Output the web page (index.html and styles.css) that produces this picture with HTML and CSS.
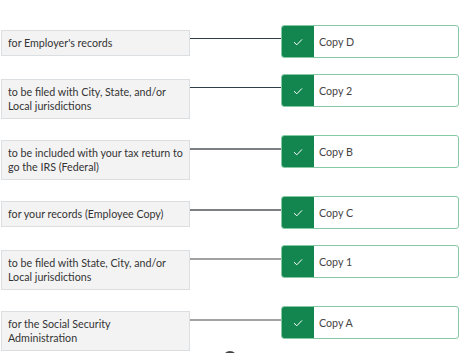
FILE: index.html
```html
<!DOCTYPE html>
<html lang="en">
<head>
    <meta charset="UTF-8">
    <meta name="viewport" content="width=device-width, initial-scale=1.0">
    <title>W-2 Copies</title>
    <link rel="stylesheet" href="styles.css">
</head>
<body>
    <div class="match-list">
        <div class="match-row">
            <div class="prompt">for Employer's records</div>
            <div class="connector dark"></div>
            <div class="answer">
                <span class="tick"><svg width="10" height="8" viewBox="0 0 10 8"><path d="M1 4.2 L3.8 6.8 L9 1.4" fill="none" stroke="#fff" stroke-width="1"/></svg></span>
                <span class="label">Copy D</span>
            </div>
        </div>
        <div class="match-row">
            <div class="prompt">to be filed with City, State, and/or<br>Local jurisdictions</div>
            <div class="connector dark"></div>
            <div class="answer">
                <span class="tick"><svg width="10" height="8" viewBox="0 0 10 8"><path d="M1 4.2 L3.8 6.8 L9 1.4" fill="none" stroke="#fff" stroke-width="1"/></svg></span>
                <span class="label">Copy 2</span>
            </div>
        </div>
        <div class="match-row">
            <div class="prompt">to be included with your tax return to<br>go the IRS (Federal)</div>
            <div class="connector mid"></div>
            <div class="answer">
                <span class="tick"><svg width="10" height="8" viewBox="0 0 10 8"><path d="M1 4.2 L3.8 6.8 L9 1.4" fill="none" stroke="#fff" stroke-width="1"/></svg></span>
                <span class="label">Copy B</span>
            </div>
        </div>
        <div class="match-row">
            <div class="prompt">for your records (Employee Copy)</div>
            <div class="connector mid"></div>
            <div class="answer">
                <span class="tick"><svg width="10" height="8" viewBox="0 0 10 8"><path d="M1 4.2 L3.8 6.8 L9 1.4" fill="none" stroke="#fff" stroke-width="1"/></svg></span>
                <span class="label">Copy C</span>
            </div>
        </div>
        <div class="match-row">
            <div class="prompt">to be filed with State, City, and/or<br>Local jurisdictions</div>
            <div class="connector light"></div>
            <div class="answer">
                <span class="tick"><svg width="10" height="8" viewBox="0 0 10 8"><path d="M1 4.2 L3.8 6.8 L9 1.4" fill="none" stroke="#fff" stroke-width="1"/></svg></span>
                <span class="label">Copy 1</span>
            </div>
        </div>
        <div class="match-row">
            <div class="prompt">for the Social Security<br>Administration</div>
            <div class="connector light"></div>
            <div class="answer">
                <span class="tick"><svg width="10" height="8" viewBox="0 0 10 8"><path d="M1 4.2 L3.8 6.8 L9 1.4" fill="none" stroke="#fff" stroke-width="1"/></svg></span>
                <span class="label">Copy A</span>
            </div>
        </div>
    </div>
    <div class="more"></div>
</body>
</html>
```

FILE: styles.css
```css
/* Page */
body {
    margin: 0;
    font-family: Lato, "Open Sans", sans-serif;
    background: #fff;
    color: #333;
    overflow: hidden;
}
/* Matching list */
.match-list {
    display: flex;
    flex-direction: column;
    gap: 16px;
    padding: 25px 0 0 1px;
}
.match-row {
    display: flex;
    align-items: flex-start;
}
/* Left side statements */
.prompt {
    box-sizing: border-box;
    width: 189px;
    margin-top: 5px;
    padding: 5px 2px 5px 6px;
    background: #f3f3f3;
    border: 1px solid #dcdfe2;
    font-size: 10.7px;
    line-height: 14px;
    color: #333;
}
/* Lines joining the pairs */
.connector {
    width: 91px;
    height: 1px;
    margin-top: 13px;
    background: #2f3e46;
}
.connector.mid {
    height: 2px;
    background: #7c8084;
}
.connector.light {
    height: 2px;
    background: #a2a2a2;
}
/* Right side answers */
.answer {
    box-sizing: border-box;
    display: flex;
    width: 178px;
    height: 33px;
    border: 1px solid #85c9a5;
    border-radius: 3px;
    overflow: hidden;
}
.tick {
    display: flex;
    align-items: center;
    justify-content: center;
    width: 32px;
    background: #13864f;
}
.label {
    display: flex;
    align-items: center;
    padding-left: 5px;
    font-size: 10.7px;
    color: #444;
}
/* Partly hidden control below the list */
.more {
    box-sizing: border-box;
    width: 14px;
    height: 14px;
    margin: 0 0 0 223px;
    border: 2px solid #444;
    border-radius: 50%;
}
```
